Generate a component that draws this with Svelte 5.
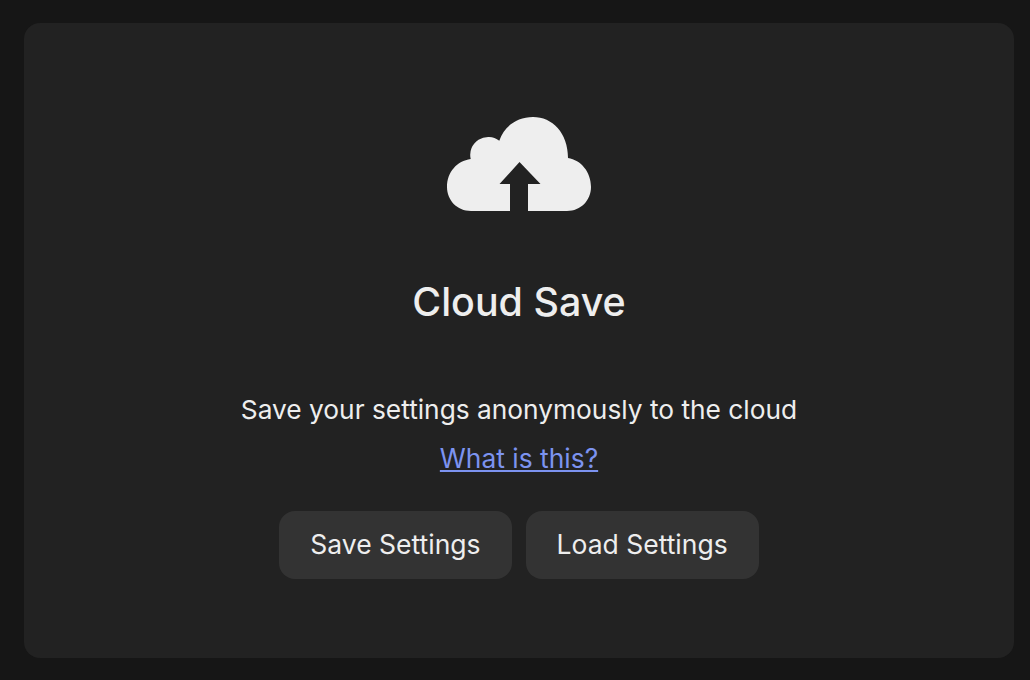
<script>
  let title = "Cloud Save";
</script>

<main class="page">
  <section class="card">
    <svg class="cloud" viewBox="0 0 144 94" width="144" height="94" aria-hidden="true">
      <path d="M24 94 C10 94 0 83 0 70 C0 55 10 44 23.7 42 A18 18 0 0 1 52.3 23.7 C57 9.5 70 0 86 0 C105.3 0 121 15.7 121 41 C134 43 144 55 144 70 C144 83 134 94 120 94 H81 V67 H93.5 L72.5 45 L52.5 67 H63 V94 Z" />
    </svg>
    <h1>{title}</h1>
    <p>Save your settings anonymously to the cloud</p>
    <a href="#help">What is this?</a>
    <div class="actions">
      <button>Save Settings</button>
      <button>Load Settings</button>
    </div>
  </section>
</main>

<style>
  :global(body) {
    background: #161616;
    font-family: Inter, "Open Sans", sans-serif;
    color: #eee;
  }

  .page {
    height: 680px;
    padding: 23px 16px 22px 24px;
    box-sizing: border-box;
  }

  .card {
    height: 100%;
    background: #222;
    border-radius: 16px;
    display: flex;
    flex-direction: column;
    align-items: center;
    padding-top: 94px;
    box-sizing: border-box;
  }

  .cloud {
    fill: #eee;
    display: block;
  }

  h1 {
    margin: 69px 0 0;
    font-size: 39.4px;
    line-height: 44px;
    font-weight: 500;
  }

  p {
    margin: 70px 0 0;
    font-size: 26.3px;
    line-height: 32px;
  }

  a {
    margin-top: 16px;
    font-size: 26.4px;
    line-height: 32px;
    color: #7c93f0;
  }

  .actions {
    display: flex;
    gap: 14px;
    margin-top: 37px;
  }

  button {
    height: 68px;
    padding: 0 31px 3px;
    border: 0;
    border-radius: 16px;
    background: #333;
    color: #eee;
    font: inherit;
    font-size: 26.5px;
  }
</style>
